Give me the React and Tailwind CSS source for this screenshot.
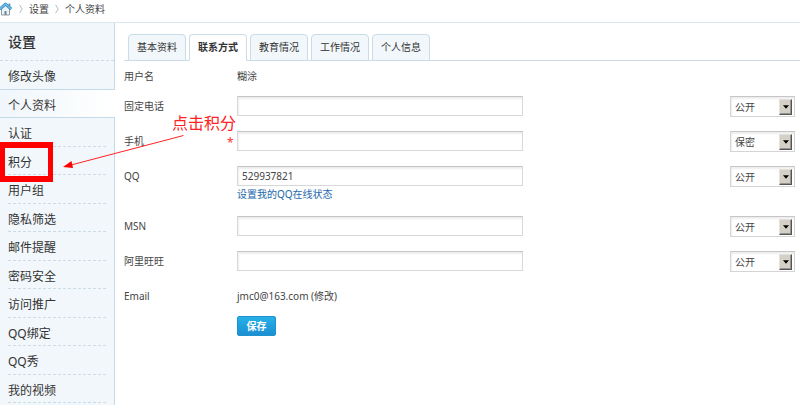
import React, { useState } from 'react';

const menuItems = [
  '修改头像', '个人资料', '认证', '积分', '用户组', '隐私筛选',
  '邮件提醒', '密码安全', '访问推广', 'QQ绑定', 'QQ秀', '我的视频',
];

const tabs = ['基本资料', '联系方式', '教育情况', '工作情况', '个人信息'];

const HomeIcon = () => (
  <svg width="14" height="14" viewBox="0 0 14 14" aria-hidden="true">
    <path d="M2.5 6.5 6.500 3l4 3.500V13h-8z" fill="#eef2f5" stroke="#8b9aa5" strokeWidth="1" />
    <path d="M5.500 9h2v4h-2z" fill="#6f8695" />
    <path d="M9.500 1.500h1.800v3.200L9.500 3z" fill="#5793bd" />
    <path d="M.8 7.200 6.500 2l5.700 5.200" fill="none" stroke="#3486bd" strokeWidth="3" strokeLinejoin="round" />
    <path d="M.9 7 6.500 2l5.600 5" fill="none" stroke="#6cc0ee" strokeWidth="1.6" strokeLinejoin="round" />
  </svg>
);

const Separator = () => (
  <svg width="4" height="10" viewBox="0 0 4 10" className="mx-1.5" aria-hidden="true">
    <path d="M.5.8 3.200 5 .5 9.200" fill="none" stroke="#b4bcc2" strokeWidth="1" />
  </svg>
);

const PrivacySelect = ({ id, label, defaultValue }) => (
  <div className="relative ml-auto mr-[5px] h-[21px] w-[65px]">
    <select
      id={`${id}-privacy`}
      aria-label={label}
      defaultValue={defaultValue}
      className="block h-full w-full appearance-none border border-[#d4d4d4] border-t-[#c6c6c6] bg-white pl-1 text-[10px] leading-[18px] text-[#444] shadow-[inset_1px_2px_2px_#eeeeee] outline-none"
    >
      <option>公开</option>
      <option>保密</option>
    </select>
    <span className="pointer-events-none absolute right-[3px] top-[3px] flex h-4 w-[13px] items-center justify-center border border-b-[#555] border-l-[#e4e1da] border-r-[#555] border-t-[#e4e1da] bg-[#d4d0c8] shadow-[inset_-1px_-1px_0_#99958e]">
      <svg width="6" height="4" viewBox="0 0 6 4" aria-hidden="true">
        <path d="M0 .3h6L3 3.800z" fill="#000" />
      </svg>
    </span>
  </div>
);

const Field = ({ id, label, value = '', required, privacy = '公开', children }) => (
  <div className="flex items-start pb-[14px]">
    <label htmlFor={id} className="w-[103px] shrink-0 leading-5">{label}</label>
    <span className="h-5 w-[10px] shrink-0 pt-1 text-xs leading-4 text-[#f33]">{required && '*'}</span>
    <div>
      <input
        id={id}
        type="text"
        defaultValue={value}
        className="block h-5 w-[286px] border border-[#d8d8d8] border-t-[#c4c4c4] bg-white px-1 text-[10px] text-[#444] shadow-[inset_1px_2px_2px_#eeeeee] outline-none"
      />
      {children}
    </div>
    <PrivacySelect id={id} label={label} defaultValue={privacy} />
  </div>
);

const App = () => {
  const [activeTab, setActiveTab] = useState('联系方式');

  return (
    <div className="relative flex min-h-screen flex-col bg-white font-['Noto_Sans','Noto_Sans_CJK_SC',sans-serif] text-[10px] text-[#444]">
      <nav className="flex h-[23px] items-center border-b border-[#dce8f0] pb-1">
        <a href="#home" aria-label="首页" className="-ml-px"><HomeIcon /></a>
        <Separator />
        <a href="#settings">设置</a>
        <Separator />
        <a href="#profile">个人资料</a>
      </nav>

      <div className="flex flex-1">
        {/* --- SIDEBAR --- */}
        <aside className="w-[115px] shrink-0 border-r border-[#c5d9e6] bg-[#f2f7fb]">
          <h1 className="h-[38px] border-b border-dashed border-[#cddbe4] pl-2 text-sm font-medium leading-[38px] text-[#333]">设置</h1>
          <ul className="text-xs leading-8 text-[#333]">
            {menuItems.map((item, i) => {
              if (item === '个人资料') {
                return (
                  <li key={item} className="relative -mr-px h-7 border-b border-[#c5d9e6] bg-linear-to-r from-[#f0f6fb] to-white pl-2">
                    <a href="#profile" className="block h-full">{item}</a>
                  </li>
                );
              }
              return (
                <li key={item} className="odd:h-[29px] even:h-7">
                  <a
                    href={`#menu-${i}`}
                    className={i === 0
                      ? 'block h-full border-b border-[#c5d9e6] pl-2'
                      : 'mx-2 block h-full border-b border-dashed border-[#cddbe4]'}
                  >
                    {item}
                  </a>
                </li>
              );
            })}
          </ul>
        </aside>

        {/* --- CONTENT --- */}
        <main className="min-w-0 flex-1 pl-[9px] pt-[11px]">
          <div role="tablist" className="flex gap-[3px] border-b border-[#c9dce8] pl-1">
            {tabs.map((tab) => (
              <button
                key={tab}
                type="button"
                role="tab"
                aria-selected={activeTab === tab}
                onClick={() => setActiveTab(tab)}
                className={`-mb-px h-[27px] rounded-t border border-[#c9dce8] px-2 text-[#333] ${activeTab === tab ? 'border-b-white bg-white font-bold' : 'bg-[#f2f7fb]'}`}
              >
                {tab}
              </button>
            ))}
          </div>

          <form className="pt-[5px]" onSubmit={(e) => e.preventDefault()}>
            <div className="flex pb-[10px] leading-5">
              <span className="w-[113px] shrink-0">用户名</span>
              <span>糊涂</span>
            </div>
            <Field id="phone" label="固定电话" />
            <Field id="mobile" label="手机" required privacy="保密" />
            <Field id="qq" label="QQ" value="529937821">
              <a href="#qq-status" className="block h-4 leading-4 text-[#2369ad]">设置我的QQ在线状态</a>
            </Field>
            <Field id="msn" label="MSN" />
            <Field id="wangwang" label="阿里旺旺" />
            <div className="flex pb-[10px] leading-5">
              <span className="w-[113px] shrink-0">Email</span>
              <span>jmc0@163.com (<a href="#email">修改</a>)</span>
            </div>
            <button type="submit" className="ml-[113px] block h-5 w-[39px] rounded-xs border border-[#1f93cd] bg-linear-to-b from-[#27b0e8] to-[#1c8fd2] font-bold leading-[18px] text-white">
              保存
            </button>
          </form>
        </main>
      </div>

      {/* --- ANNOTATION --- */}
      <div className="pointer-events-none absolute left-0 top-[142px] h-10 w-[53px] border-x-[5px] border-y-[6px] border-[#f00]" />
      <svg className="pointer-events-none absolute left-[62px] top-[132px]" width="124" height="40" viewBox="0 0 124 40" aria-hidden="true">
        <path d="M121.500 3.500 9 33" stroke="#f22" strokeWidth="1" />
        <path d="M1 35 9.500 29 11 36z" fill="#f00" />
      </svg>
      <span className="pointer-events-none absolute left-[172px] top-[113px] text-base leading-5 text-[#f22]">点击积分</span>
    </div>
  );
};

export default App;
